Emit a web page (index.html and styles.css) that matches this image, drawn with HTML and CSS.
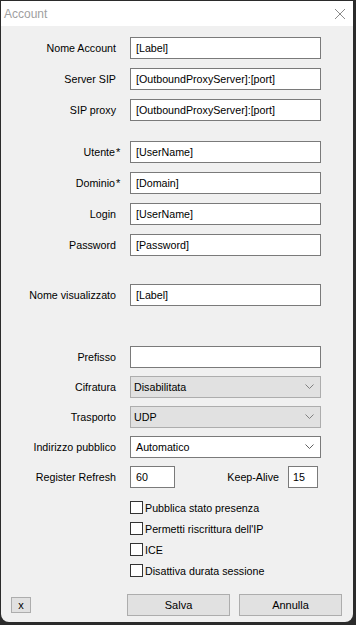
FILE: index.html
```html
<!DOCTYPE html>
<html lang="it">
<head>
  <meta charset="UTF-8" />
  <title>Account</title>
  <link rel="stylesheet" href="styles.css">
</head>
<body>
  <div class="window">
    <div class="titlebar">
      <span class="title">Account</span>
      <svg class="close" width="12" height="12" viewBox="0 0 12 12">
        <path d="M1 1 L11 11 M11 1 L1 11" stroke="#8a8a8a" stroke-width="1" fill="none" />
      </svg>
    </div>

    <div class="content">
      <div class="group">
        <div class="field"><label>Nome Account</label><input class="text" value="[Label]"></div>
        <div class="field"><label>Server SIP</label><input class="text" value="[OutboundProxyServer]:[port]"></div>
        <div class="field"><label>SIP proxy</label><input class="text" value="[OutboundProxyServer]:[port]"></div>
      </div>

      <div class="group gap-20">
        <div class="field"><label>Utente<span class="req">*</span></label><input class="text" value="[UserName]"></div>
        <div class="field"><label>Dominio<span class="req">*</span></label><input class="text" value="[Domain]"></div>
        <div class="field"><label>Login</label><input class="text" value="[UserName]"></div>
        <div class="field"><label>Password</label><input class="text" value="[Password]"></div>
      </div>

      <div class="group gap-28">
        <div class="field"><label>Nome visualizzato</label><input class="text" value="[Label]"></div>
      </div>

      <div class="group gap-40 tight">
        <div class="field"><label>Prefisso</label><input class="text" value=""></div>
        <div class="field">
          <label>Cifratura</label>
          <div class="combo disabled">
            <span>Disabilitata</span>
            <svg class="arrow" width="9" height="5" viewBox="0 0 9 5"><path d="M0.5 0.5 L4.5 4.5 L8.5 0.5" stroke="#808080" fill="none" /></svg>
          </div>
        </div>
        <div class="field">
          <label>Trasporto</label>
          <div class="combo disabled">
            <span>UDP</span>
            <svg class="arrow" width="9" height="5" viewBox="0 0 9 5"><path d="M0.5 0.5 L4.5 4.5 L8.5 0.5" stroke="#808080" fill="none" /></svg>
          </div>
        </div>
        <div class="field">
          <label>Indirizzo pubblico</label>
          <div class="combo">
            <span>Automatico</span>
            <svg class="arrow" width="9" height="5" viewBox="0 0 9 5"><path d="M0.5 0.5 L4.5 4.5 L8.5 0.5" stroke="#606060" fill="none" /></svg>
          </div>
        </div>
        <div class="field">
          <label>Register Refresh</label>
          <input class="text short" value="60">
          <span class="keep-label">Keep-Alive</span>
          <input class="text tiny" value="15">
        </div>
      </div>

      <div class="checks">
        <div class="check"><span class="box"></span>Pubblica stato presenza</div>
        <div class="check"><span class="box"></span>Permetti riscrittura dell'IP</div>
        <div class="check"><span class="box"></span>ICE</div>
        <div class="check"><span class="box"></span>Disattiva durata sessione</div>
      </div>
    </div>

    <div class="footer">
      <button class="btn small">x</button>
      <div class="actions">
        <button class="btn">Salva</button>
        <button class="btn">Annulla</button>
      </div>
    </div>
  </div>
</body>
</html>
```

FILE: styles.css
```css
html, body {
  margin: 0;
  padding: 0;
  height: 100%;
  background-color: #2b2b2b;
  font-family: "Liberation Sans", Arial, sans-serif;
  font-size: 10.7px;
  color: #000;
  overflow: hidden;
}

.window {
  margin: 1px 0 0 1px;
  width: 352px;
  height: 621px;
  background-color: #f0f0f0;
  border-radius: 0 0 8px 8px;
  overflow: hidden;
  display: flex;
  flex-direction: column;
}

.titlebar {
  height: 25px;
  background-color: #fff;
  display: flex;
  align-items: center;
  justify-content: space-between;
  padding: 0 7px 0 3px;
}

.title {
  font-size: 12px;
  color: #a0a0a0;
}

.close {
  display: block;
}

.content {
  padding-top: 11px;
  display: flex;
  flex-direction: column;
}

.group {
  display: flex;
  flex-direction: column;
  gap: 9px;
}

.group.tight {
  gap: 8px;
}

.gap-20 { margin-top: 20px; }
.gap-28 { margin-top: 28px; }
.gap-40 { margin-top: 40px; }

.field {
  display: flex;
  align-items: center;
  height: 22px;
}

.field label {
  width: 115px;
  margin-right: 14px;
  text-align: right;
  white-space: nowrap;
}

.req {
  display: inline-block;
  width: 0;
  margin-left: 1px;
  font-size: 11px;
}

.text {
  box-sizing: border-box;
  width: 191px;
  height: 22px;
  margin: 0;
  padding: 0 5px 1px;
  border: 1px solid #7a7a7a;
  background-color: #fff;
  font-family: inherit;
  font-size: 10.7px;
  color: #000;
  outline: none;
}

.text.short {
  width: 45px;
}

.text.tiny {
  width: 30px;
  padding-left: 4px;
}

.keep-label {
  width: 104px;
  margin-right: 9px;
  text-align: right;
}

.combo {
  box-sizing: border-box;
  width: 191px;
  height: 22px;
  display: flex;
  align-items: center;
  justify-content: space-between;
  padding: 0 6px 1px 5px;
  border: 1px solid #7a7a7a;
  background-color: #fff;
}

.combo.disabled {
  padding-left: 3px;
  border-color: #adadad;
  background-color: #e1e1e1;
}

.arrow {
  display: block;
}

.checks {
  margin-top: 9px;
  padding-left: 129px;
  display: flex;
  flex-direction: column;
}

.check {
  height: 21px;
  display: flex;
  align-items: center;
}

.box {
  box-sizing: border-box;
  width: 13px;
  height: 13px;
  margin-right: 2px;
  border: 1px solid #333;
  background-color: #fff;
}

.footer {
  margin-top: auto;
  padding: 0 11px 6px 10px;
  display: flex;
  align-items: center;
  justify-content: space-between;
}

.actions {
  display: flex;
  gap: 9px;
}

.btn {
  box-sizing: border-box;
  width: 103px;
  height: 22px;
  margin: 0;
  padding: 0 0 1px;
  border: 1px solid #adadad;
  background-color: #e1e1e1;
  font-family: inherit;
  font-size: 11px;
  color: #000;
}

.btn.small {
  width: 20px;
  height: 16px;
  font-size: 11px;
}
```
